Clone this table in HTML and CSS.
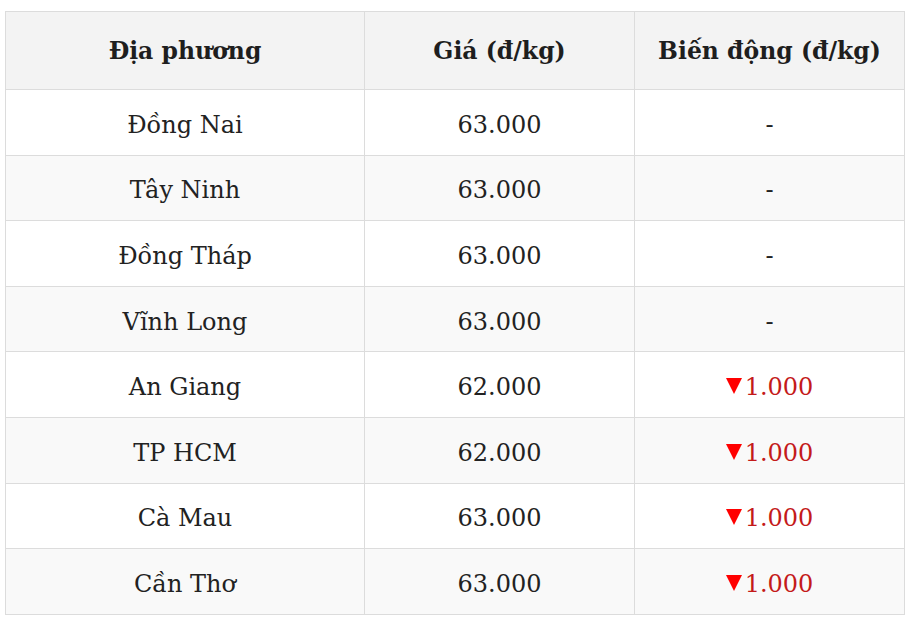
FILE: index.html
```html
<!DOCTYPE html>
<html lang="vi">
<head>
<meta charset="utf-8">
<link rel="stylesheet" href="styles.css">
</head>
<body>
<table class="price-table">
  <thead>
    <tr><th class="c1">Địa phương</th><th class="c2">Giá (đ/kg)</th><th class="c3">Biến động (đ/kg)</th></tr>
  </thead>
  <tbody>
    <tr><td>Đồng Nai</td><td>63.000</td><td>-</td></tr>
    <tr><td>Tây Ninh</td><td>63.000</td><td>-</td></tr>
    <tr><td>Đồng Tháp</td><td>63.000</td><td>-</td></tr>
    <tr><td>Vĩnh Long</td><td>63.000</td><td>-</td></tr>
    <tr><td>An Giang</td><td>62.000</td><td class="down"><span class="tri"></span>1.000</td></tr>
    <tr><td>TP HCM</td><td>62.000</td><td class="down"><span class="tri"></span>1.000</td></tr>
    <tr><td>Cà Mau</td><td>63.000</td><td class="down"><span class="tri"></span>1.000</td></tr>
    <tr><td>Cần Thơ</td><td>63.000</td><td class="down"><span class="tri"></span>1.000</td></tr>
  </tbody>
</table>
</body>
</html>
```
FILE: styles.css
```css
html, body { margin: 0; padding: 0; background: #fff; }
body { padding: 11px 0 0 5px; }
.price-table {
  border-collapse: collapse;
  width: 900px;
  font-family: "DejaVu Serif", serif;
  color: #222;
  font-size: 24px;
}
.price-table th, .price-table td {
  border: 1px solid #dcdcdc;
  text-align: center;
  vertical-align: middle;
  padding: 0;
}
.price-table th {
  background: #f3f3f3;
  font-weight: bold;
  font-size: 23.5px;
  height: 77px;
  color: #1e1e1e;
}
.price-table td { height: 59.6px; font-weight: normal; padding-top: 5px; }
.price-table tbody tr:nth-child(even) td { background: #f9f9f9; }
.c1 { width: 358px; }
.c2 { width: 269px; }
.down { color: #c41a1a; }
.tri {
  display: inline-block;
  width: 0;
  height: 0;
  border-left: 8.5px solid transparent;
  border-right: 8.5px solid transparent;
  border-top: 16px solid #f00;
  margin-right: 3px;
  vertical-align: 1px;
}
```
